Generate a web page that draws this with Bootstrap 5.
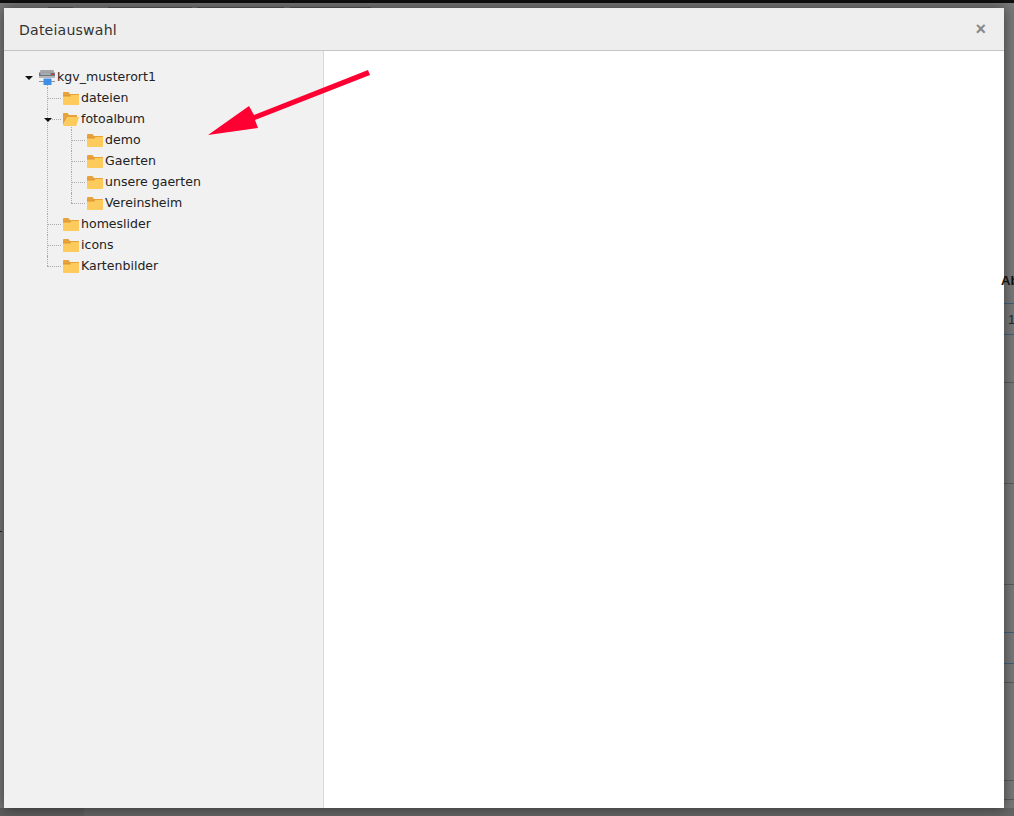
<!DOCTYPE html>
<html lang="de">
<head>
<meta charset="utf-8">
<title>Dateiauswahl</title>
<link href="https://cdn.jsdelivr.net/npm/bootstrap@5.3.0/dist/css/bootstrap.min.css" rel="stylesheet">
<style>
html,body{height:100%;overflow:hidden}
body{position:relative;background-color:#787878;
background-image:linear-gradient(#0e0e0e,#0e0e0e),linear-gradient(#5c5c5c,#5c5c5c),linear-gradient(#646464,#646464);
background-size:100% 3px,84px 8px,100% 8px;background-position:0 0,0 100%,0 100%;background-repeat:no-repeat;
font-family:"DejaVu Sans",sans-serif;padding:8px 10px 8px 4px}
.strip-line{position:absolute;right:0;width:10px;height:1px;background:#5a5a5a}
.strip-blue{background:#3f5f7f}
.top-seg{position:absolute;top:7px;height:1px;background:#5a5a5a}
.strip-txt{position:absolute;color:#111;font:700 13px "Liberation Sans",sans-serif;line-height:15px;z-index:2}
.strip-num{font-weight:400;color:#222}
.left-tick{position:absolute;left:0;top:531px;width:2px;height:1px;background:#222}
.dlg{height:800px;background:#fff;box-shadow:0 0 12px rgba(0,0,0,.5);position:relative;z-index:1}
.dlg-head{height:43px;background:#eee;border-bottom:1px solid #c4c4c4;padding:2px 18px 0 15px}
.dlg-title{font:400 14.1px/1 "DejaVu Sans",sans-serif;color:#333;letter-spacing:.2px}
.dlg-x{font:700 18px/1 "Liberation Sans",sans-serif;color:#888;margin-top:-3px}
.side{width:320px;background:#f1f1f1;border-right:1px solid #d9d9d9;padding:16px 0 0 20px;flex:none}
.tree,.tree ul{list-style:none;margin:0;padding:0}
.tree ul{padding-left:24px}
.node{height:21px;display:flex;align-items:center;position:relative;font-size:12.55px;color:#222;white-space:nowrap}
.node svg{flex:none}
.node .lbl{margin-left:2px}
.tree li{position:relative}
.tree ul>li:first-child::before{content:"";position:absolute;left:-1px;top:-3px;height:3px;width:0;border-left:1px dotted #aaa}
.tree ul>li:last-child::after{content:"";position:absolute;left:-1px;top:0;height:10px;width:0;border-left:1px dotted #aaa}
.tree ul>li:not(:last-child)::after{content:"";position:absolute;left:-1px;top:0;bottom:0;width:0;border-left:1px dotted #aaa}
.node.conn::before{content:"";position:absolute;left:-1px;top:10px;width:14px;border-top:1px dotted #aaa}
.caret-icon{position:absolute;left:1px;width:0;height:0;border:4px solid transparent;border-top-color:#111;border-bottom:0;top:9px;z-index:1}
.caret-icon.caret-sub{left:-4px}
.folder{margin-left:15px}
.root-ic{margin-left:15px}
.arrow-wrap{position:absolute;left:204px;top:66px;z-index:2;pointer-events:none}
</style>
</head>
<body>
<span class="top-seg" style="left:48px;width:25px"></span>
<span class="top-seg" style="left:108px;width:84px"></span>
<span class="top-seg" style="left:197px;width:87px"></span>
<span class="top-seg" style="left:290px;width:81px"></span>
<span class="left-tick"></span>
<span class="strip-line strip-blue" style="top:303px"></span>
<span class="strip-line strip-blue" style="top:334px"></span>
<span class="strip-line" style="top:382px"></span>
<span class="strip-line" style="top:483px"></span>
<span class="strip-line" style="top:584px"></span>
<span class="strip-line strip-blue" style="top:632px"></span>
<span class="strip-line strip-blue" style="top:663px"></span>
<span class="strip-line" style="top:682px"></span>
<span class="strip-line" style="top:780px"></span>
<span class="strip-line" style="top:799px"></span>
<div class="dlg d-flex flex-column">
  <div class="dlg-head d-flex align-items-center justify-content-between">
    <span class="dlg-title">Dateiauswahl</span>
    <span class="dlg-x">×</span>
  </div>
  <div class="d-flex flex-grow-1">
    <div class="side">
      <svg width="0" height="0" class="d-block">
        <defs>
          <symbol id="fld" viewBox="0 0 16 13">
            <path d="M0 2.500V1.200C0 .6.500 0 1 0h4.500l1.500 2H15.500c.3 0 .5.2.5.5V4H0z" fill="#e8a23c"/>
            <path d="M0 4h16v8c0 .6-.4 1-1 1H1c-.6 0-1-.4-1-1z" fill="#fdcb5c"/>
            <path d="M8 3h8v1H8z" fill="#fdcb5c"/>
            <path d="M0 3h7l1 1.500H0z" fill="#e09a36"/>
          </symbol>
          <symbol id="fldo" viewBox="0 0 16 13">
            <path d="M0 12V1c0-.6.4-1 1-1h3.500L6 2h8v2H4.500z" fill="#e8a23c"/>
            <path d="M4.300 4H16l-2.600 8.400c-.1.4-.4.6-.8.6H0z" fill="#fdcb5c"/>
          </symbol>
        </defs>
      </svg>
      <ul class="tree">
        <li>
          <div class="node"><i class="caret-icon"></i>
            <svg class="root-ic" width="16" height="15" viewBox="0 0 16 15">
              <rect x="1" y="0" width="14" height="2.500" rx="1" fill="#a2a7ac"/>
              <rect x="0" y="2.500" width="16" height="3.500" fill="#6f767d"/>
              <rect x="1.500" y="3.500" width="10" height="1" fill="#e0e2e4"/>
              <rect x="12.500" y="3.500" width="2.500" height="1.500" fill="#d33"/>
              <rect x="0" y="6" width="16" height="2" fill="#b3b7bb"/>
              <rect x="0" y="11" width="16" height="1" fill="#8d9399"/>
              <rect x="4.500" y="8.500" width="8" height="6.500" rx=".5" fill="#3f8fe6"/>
            </svg>
            <span class="lbl">kgv_musterort1</span>
          </div>
          <ul>
            <li><div class="node conn"><svg class="folder" width="16" height="13"><use href="#fld"/></svg><span class="lbl">dateien</span></div></li>
            <li>
              <div class="node conn"><i class="caret-icon caret-sub"></i><svg class="folder" width="16" height="13"><use href="#fldo"/></svg><span class="lbl">fotoalbum</span></div>
              <ul>
                <li><div class="node conn"><svg class="folder" width="16" height="13"><use href="#fld"/></svg><span class="lbl">demo</span></div></li>
                <li><div class="node conn"><svg class="folder" width="16" height="13"><use href="#fld"/></svg><span class="lbl">Gaerten</span></div></li>
                <li><div class="node conn"><svg class="folder" width="16" height="13"><use href="#fld"/></svg><span class="lbl">unsere gaerten</span></div></li>
                <li><div class="node conn"><svg class="folder" width="16" height="13"><use href="#fld"/></svg><span class="lbl">Vereinsheim</span></div></li>
              </ul>
            </li>
            <li><div class="node conn"><svg class="folder" width="16" height="13"><use href="#fld"/></svg><span class="lbl">homeslider</span></div></li>
            <li><div class="node conn"><svg class="folder" width="16" height="13"><use href="#fld"/></svg><span class="lbl">icons</span></div></li>
            <li><div class="node conn"><svg class="folder" width="16" height="13"><use href="#fld"/></svg><span class="lbl">Kartenbilder</span></div></li>
          </ul>
        </li>
      </ul>
    </div>
    <div class="flex-grow-1 bg-white"></div>
  </div>
</div>
<svg class="arrow-wrap" width="170" height="74" viewBox="204 66 170 74">
  <path d="M208 135 249 106 254 115 368 70 370 75 255 120 258 128z" fill="#ff0033"/>
</svg>
<span class="strip-txt" style="left:1001px;top:273px">Ab</span>
<span class="strip-txt strip-num" style="left:1008px;top:312px">1</span>
</body>
</html>
